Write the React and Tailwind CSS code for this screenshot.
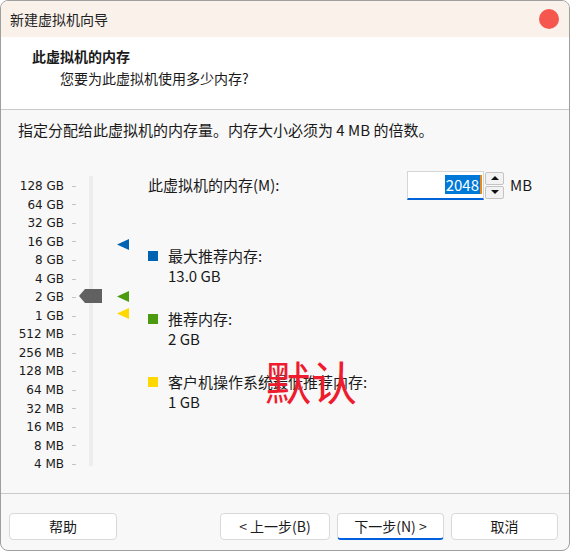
const font = { fontFamily: '"Noto Sans CJK SC", "Noto Sans", sans-serif' }

const scale = ['128 GB', '64 GB', '32 GB', '16 GB', '8 GB', '4 GB', '2 GB', '1 GB', '512 MB', '256 MB', '128 MB', '64 MB', '32 MB', '16 MB', '8 MB', '4 MB']

function Marker({ color, top }) {
  return (
    <svg width="12" height="11" viewBox="0 0 12 11" className="absolute left-[116px]" style={{ top }}>
      <path d="M0 5.5 L12 0 L12 11 Z" fill={color} />
    </svg>
  )
}

function Legend({ color, label, value }) {
  return (
    <div className="flex items-start gap-[10px]">
      <div className={`w-[10px] h-[10px] mt-[5px] ${color}`} />
      <div className="leading-[20px]">
        <div>{label}</div>
        <div>{value}</div>
      </div>
    </div>
  )
}

function Btn({ children, primary }) {
  return (
    <button
      type="button"
      className={`h-[27px] rounded-[4px] border border-[#d9d9d9] bg-white text-[14px] text-[#1a1a1a] ${
        primary ? 'border-b-2 border-b-[#0060df]' : ''
      }`}
    >
      {children}
    </button>
  )
}

export default function App() {
  return (
    <div className="w-[570px] h-[551px] bg-white text-[#1a1a1a]" style={font}>
      <div className="w-full h-full rounded-[8px] border border-[#9f9f9f] bg-[#f8f8f8] overflow-hidden flex flex-col">
        <div className="h-[36px] shrink-0 bg-[#f9f1ea] flex items-center justify-between pl-[9px] pr-[10px]">
          <span className="text-[14px] text-[#222]">新建虚拟机向导</span>
          <span className="w-[20px] h-[20px] rounded-full bg-[#f5574e]" />
        </div>
        <div className="h-[73px] shrink-0 bg-white border-b border-[#cacaca] pt-[8px] pl-[31px]">
          <div className="text-[14px] font-bold leading-[22px]">此虚拟机的内存</div>
          <div className="text-[14px] leading-[22px] pl-[28px]">您要为此虚拟机使用多少内存?</div>
        </div>
        <div className="flex-1 relative text-[15px]">
          <div className="pt-[9px] pl-[17px] leading-[22px]">指定分配给此虚拟机的内存量。内存大小必须为 4 MB 的倍数。</div>
          <div className="flex mt-[35px]">
            <div className="relative w-[140px] h-[292px] shrink-0">
              <div className="flex flex-col items-end w-[63px] pt-[1px]" style={{ fontFamily: '"DejaVu Sans", sans-serif' }}>
                {scale.map((s) => (
                  <div key={s} className="h-[18.55px] leading-[18.55px] text-[12px] flex items-center">
                    {s}
                  </div>
                ))}
              </div>
              <div className="absolute left-[71px] top-[1px] flex flex-col">
                {scale.map((s) => (
                  <div key={s} className="h-[18.55px] flex items-center">
                    <div className="w-[4px] h-px bg-[#c4c4c4]" />
                  </div>
                ))}
              </div>
              <div className="absolute left-[88px] top-0 w-[4px] h-[290px] bg-[#ededed]" />
              <svg width="23" height="14" viewBox="0 0 23 14" className="absolute left-[78px] top-[113px]">
                <path d="M0 7 L6 0 L23 0 L23 14 L6 14 Z" fill="#616161" />
              </svg>
              <Marker color="#0063b1" top={63} />
              <Marker color="#4c9a0f" top={115} />
              <Marker color="#ffd800" top={132} />
            </div>
            <div className="flex-1 pl-[7px]">
              <div className="flex items-center -mt-[6px] h-[30px]">
                <span className="w-[259px]">此虚拟机的内存(M):</span>
                <div className="w-[77px] h-[29px] bg-white border border-[#d5d5d5] border-b-2 border-b-[#0063d8] flex items-center justify-end pr-[1px]">
                  <span className="bg-[#0078d7] text-white text-[15px] leading-[19px] px-[1px] border-r-2 border-r-[#e88a1a]">2048</span>
                </div>
                <div className="flex flex-col gap-[1px] ml-[1px]">
                  {['M1 5 L5 1 L9 5 Z', 'M1 1 L5 5 L9 1 Z'].map((d) => (
                    <div key={d} className="w-[19px] h-[13px] rounded-[2px] border border-[#c4c4c4] bg-[#f2f2f2] flex items-center justify-center">
                      <svg width="10" height="6" viewBox="0 0 10 6">
                        <path d={d} fill="#111" />
                      </svg>
                    </div>
                  ))}
                </div>
                <span className="ml-[6px]">MB</span>
              </div>
              <div className="flex flex-col gap-[23px] mt-[46px]">
                <Legend color="bg-[#0063b1]" label="最大推荐内存:" value="13.0 GB" />
                <Legend color="bg-[#4c9a0f]" label="推荐内存:" value="2 GB" />
                <Legend color="bg-[#ffd800]" label="客户机操作系统最低推荐内存:" value="1 GB" />
              </div>
            </div>
          </div>
          <div className="absolute left-[264px] top-[247px] text-[46px] leading-none text-[#ee1c2e] pointer-events-none">默认</div>
        </div>
        <div className="h-[57px] shrink-0 border-t border-[#cacaca] flex items-start pt-[19px] pl-[8px] pr-[11px]">
          <div className="w-[108px] flex">
            <Btn>
              <span className="block w-[106px]">帮助</span>
            </Btn>
          </div>
          <div className="flex-1" />
          <div className="flex gap-[7px]">
            <Btn>
              <span className="block w-[108px]">&lt; 上一步(B)</span>
            </Btn>
            <Btn primary>
              <span className="block w-[105px]">下一步(N) &gt;</span>
            </Btn>
            <Btn>
              <span className="block w-[105px]">取消</span>
            </Btn>
          </div>
        </div>
      </div>
    </div>
  )
}
